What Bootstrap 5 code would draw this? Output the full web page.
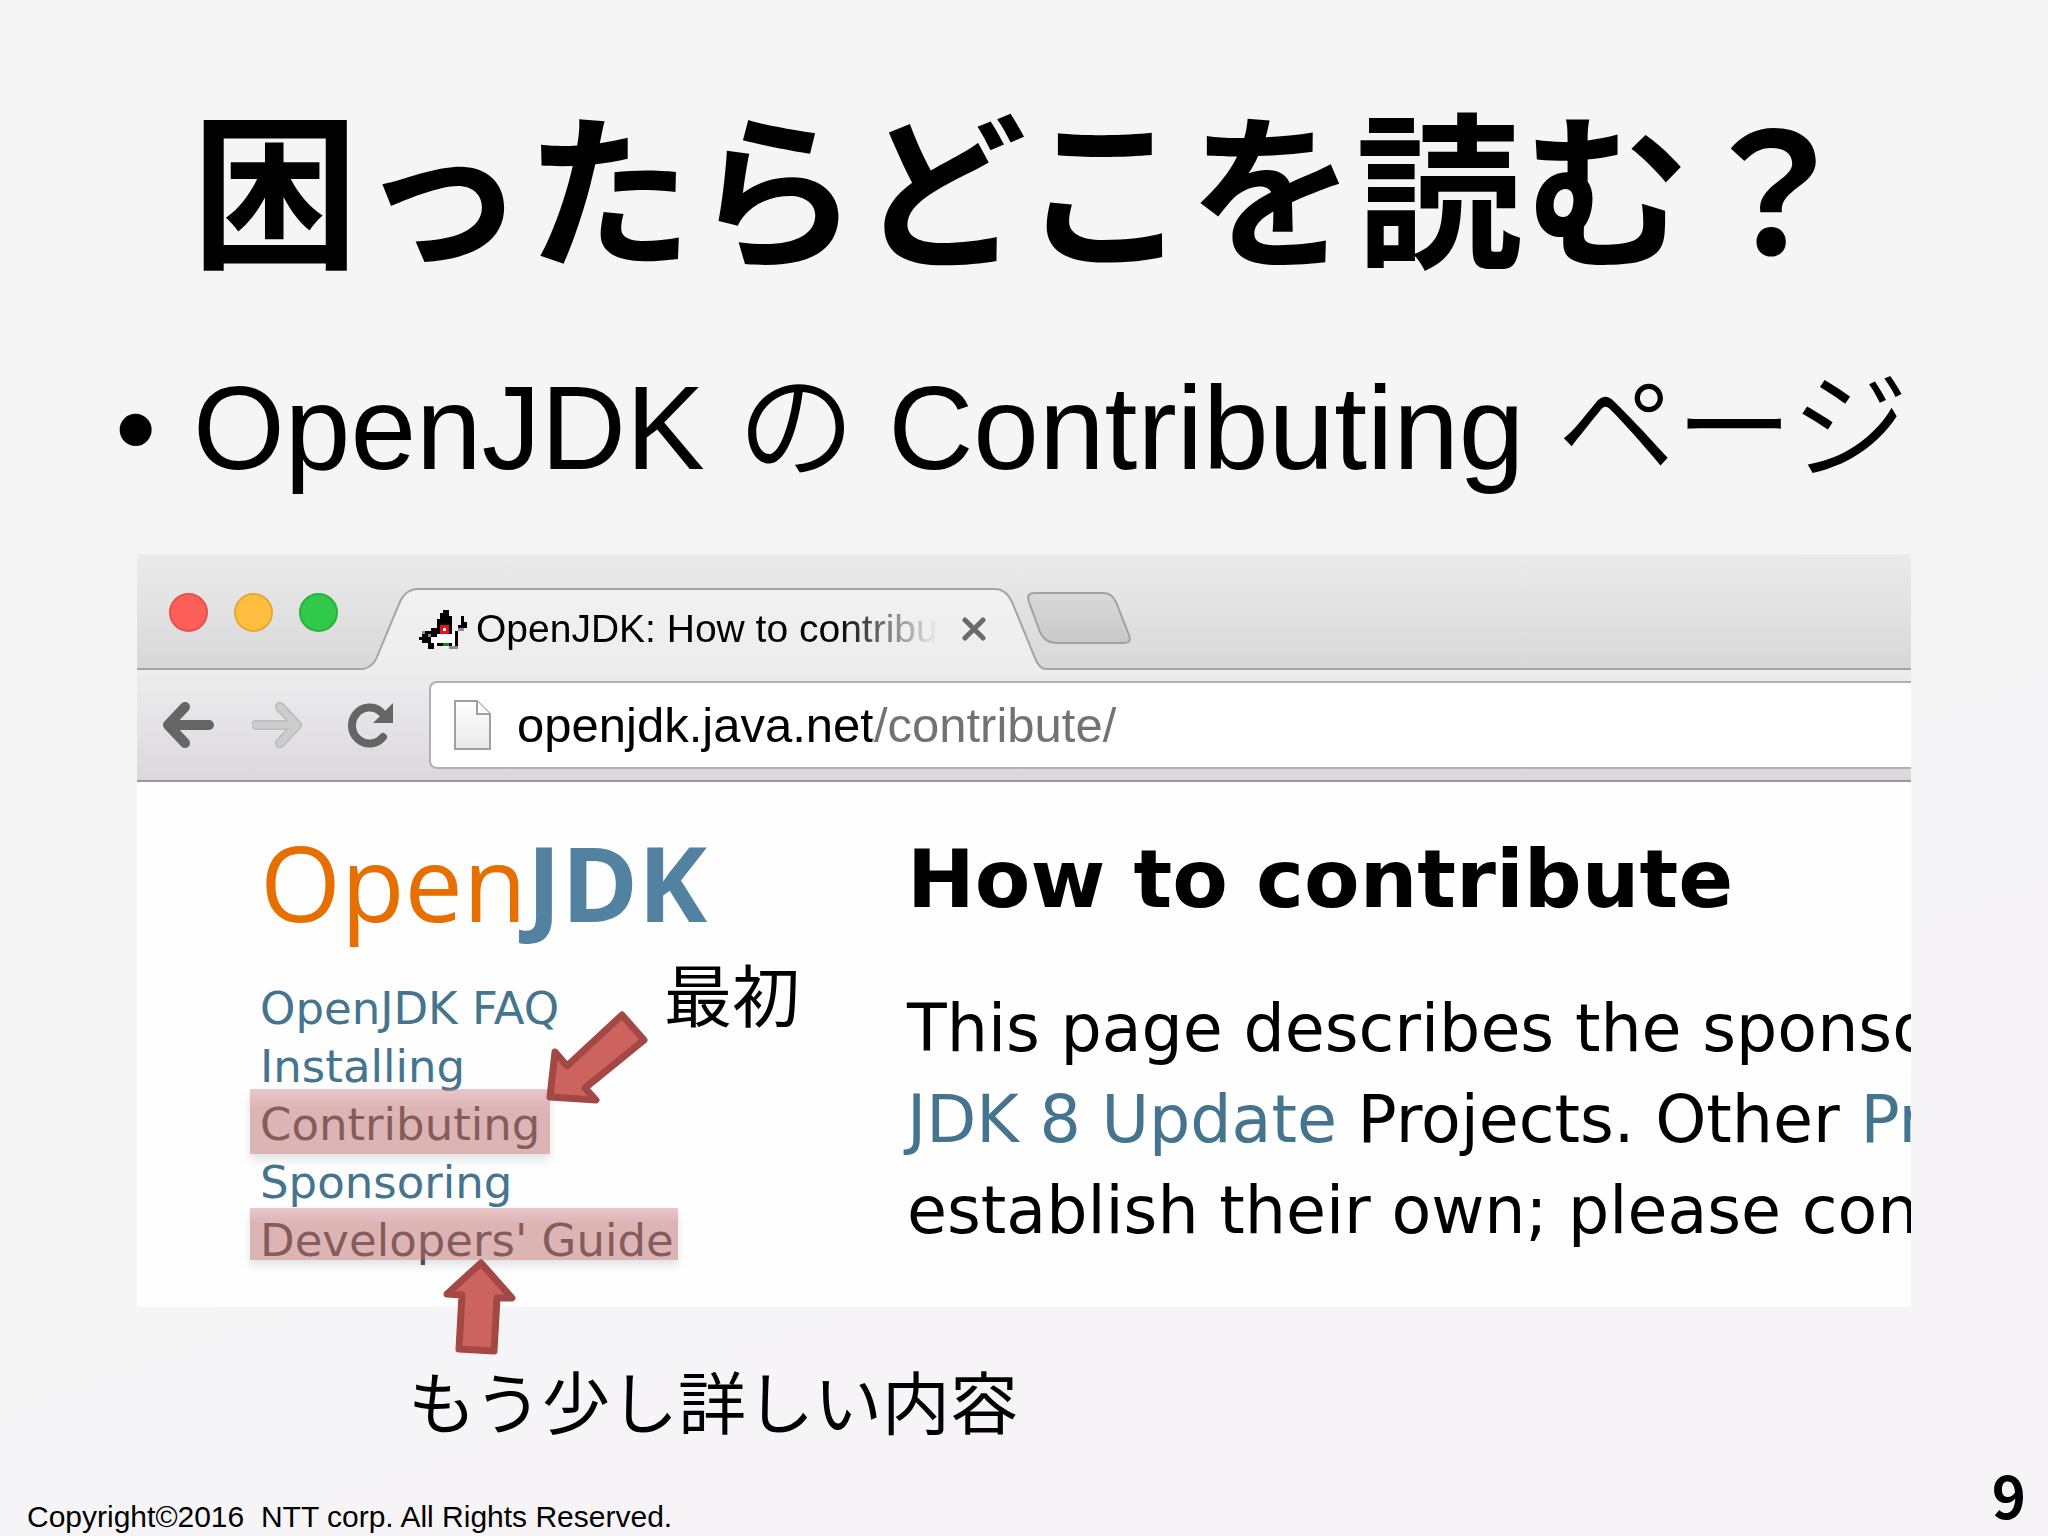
<!DOCTYPE html>
<html lang="ja">
<head>
<meta charset="utf-8">
<meta name="viewport" content="width=device-width, initial-scale=1">
<title>困ったらどこを読む？</title>
<link href="https://cdn.jsdelivr.net/npm/bootstrap@5.3.0/dist/css/bootstrap.min.css" rel="stylesheet">
<style>
  body { background: #f5f5f5; color: #000; font-family: "Liberation Sans", "Noto Sans CJK JP", sans-serif; }
  .slide { background: linear-gradient(160deg, #f5f5f5 45%, #f6f4f7 80%); padding-top: 82px; }
  .slide-title { font: 700 167px/200px "Noto Sans CJK JP", sans-serif; margin-bottom: 76px; }
  .points { padding-left: 115px; margin-bottom: 56px; font-size: 118px; line-height: 140px; font-weight: 350; }
  .points .dot { flex: 0 0 78px; }
  .shot-wrap { margin: 0 137px; }
  .shot { background: #fefefe; overflow: hidden; }

  .strip { height: 116px; background: linear-gradient(#ebebeb, #d8d8d8); border-bottom: 2px solid #a5a5a7; padding-left: 32px; }
  .light { width: 39px; height: 39px; border-radius: 50%; border: 2px solid; }
  .lights { gap: 26px; margin-right: 25px; margin-top: 2px; }
  .tab { width: 682px; height: 82px; margin: 34px 0 -2px 0; padding: 0 61px 0 56px; }
  .tab-shape { left: 0; top: 0; }
  .tab-text { font-size: 39px; line-height: 44px; margin-left: 9px; -webkit-mask-image: linear-gradient(90deg, #000 78%, transparent 100%); mask-image: linear-gradient(90deg, #000 78%, transparent 100%); }
  .plain { background: none; border: 0; padding: 0; line-height: 0; }
  .newtab { margin: 14px 0 0 -18px; }

  .toolbar { height: 112px; background: linear-gradient(#eeedee, #dad8db); border-bottom: 2px solid #98979a; padding-left: 26px; }
  .tools { gap: 37px; margin-right: 34px; }
  .urlbar { height: 88px; background: #fff; border: 2px solid #b0afb2; border-right: 0; border-radius: 8px 0 0 8px; padding-left: 23px; gap: 25px; }
  .url { font-size: 49px; line-height: 60px; border: 0; outline: 0; padding: 0; color: transparent;
         background: linear-gradient(90deg, #000 355px, #717176 355px); -webkit-background-clip: text; background-clip: text; }

  .site { height: 525px; font-family: "DejaVu Sans", sans-serif; }
  .site a { color: #45748f; text-decoration: none; }
  .side { flex: 0 0 770px; padding: 38px 0 0 123px; }
  .logo { font-family: "Open Sans", sans-serif; font-size: 104px; line-height: 124px; color: #e76f00; margin-bottom: 36px; }
  .logo b { color: #5382a1; }
  .links { font-size: 45px; line-height: 58px; }
  .site a.hl { color: #4f4d4d; }
  .hl::after { content: ""; position: absolute; background: linear-gradient(rgba(205,130,140,.45), rgba(187,107,107,.5) 30%); box-shadow: 0 6px 8px rgba(60,70,90,.14); }
  .hl-a::after { inset: -7px -10px 0 -10px; }
  .hl-b::after { inset: -4px -4px 10px -10px; }
  .main { padding-top: 47px; white-space: nowrap; }
  .main h2 { font-size: 81px; line-height: 100px; font-weight: 700; margin-bottom: 54px; }
  .main p { font-size: 65px; line-height: 91px; }

  .marks { left: 0; top: 0; overflow: visible; }
  .note { font-size: 68px; line-height: 84px; }
  .note-first { left: 527px; top: 402px; }
  .note-more { padding-left: 408px; margin-top: 56px; }
  .foot { padding: 0 22px 0 27px; }
  .copy { font-size: 30px; line-height: 38px; white-space: pre; }
  .pageno { font: 700 58px/84px "Noto Sans CJK JP", sans-serif; }
</style>
</head>
<body>
<main class="slide min-vh-100 d-flex flex-column overflow-hidden">
  <h1 class="slide-title text-center text-nowrap">困ったらどこを読む？</h1>
  <ul class="points list-unstyled text-nowrap">
    <li class="d-flex"><span class="dot">•</span><span>OpenJDK の Contributing ページ</span></li>
  </ul>

  <div class="shot-wrap position-relative">
    <div class="shot">
      <div class="strip d-flex">
        <div class="lights d-flex align-items-center">
          <span class="light" style="background:#ff5f5b;border-color:#e5524e"></span>
          <span class="light" style="background:#ffbe3e;border-color:#e3a838"></span>
          <span class="light" style="background:#31c948;border-color:#2ab140"></span>
        </div>
        <div class="tab position-relative d-flex align-items-center">
          <svg class="tab-shape position-absolute" width="682" height="82" viewBox="0 0 682 82">
            <defs><linearGradient id="tg" x1="0" y1="0" x2="0" y2="1"><stop offset="0" stop-color="#f1f1f1"/><stop offset="1" stop-color="#eeedee"/></linearGradient></defs>
            <path d="M0 82V81Q10 79 14 69L36 16Q42 1 55 1H632Q643 1 649 14L672 70Q676 80 682 81V82Z" fill="url(#tg)"/>
            <path d="M0 81Q10 79 14 69L36 16Q42 1 55 1H632Q643 1 649 14L672 70Q676 80 682 81" fill="none" stroke="#a5a5a7" stroke-width="2"/>
          </svg>
          <svg class="position-relative flex-shrink-0" width="48" height="39" viewBox="0 0 16 13" shape-rendering="crispEdges">
            <path fill="#000" d="M8 0h2v1h-2zM7 1h3v1h-3zM7 2h4v1h-4zM14 2h1v1h-1zM6 3h5v1h-5zM14 3h1v1h-1zM6 4h5v1h-5zM14 4h2v1h-2zM6 5h5v1h-5zM13 5h3v1h-3zM4 6h7v1h-7zM2 7h9v1h-9zM12 7h1v1h-1zM1 8h2v1h-2zM4 8h2v1h-2zM12 8h1v1h-1zM0 9h4v1h-4zM12 9h1v1h-1zM1 10h3v1h-3zM12 10h1v1h-1zM3 11h2v1h-2zM6 11h5v1h-5zM12 11h1v1h-1zM3 12h2v1h-2z"/>
            <path fill="#fff" d="M6 8h6v1h-6zM4 9h8v2h-8zM5 11h1v1h-1zM11 11h1v1h-1zM11 7h1v1h-1z"/>
            <path fill="#e8131a" d="M7 5h3v3h-3z"/><path fill="#fff" d="M8 6h1v1h-1z"/>
            <path fill="#0a8a12" d="M8 11h2v1h-2z"/>
            <path fill="#8b8b8b" d="M13 6h2v1h-2zM10 12h3v1h-3zM1 7h1v1h-1zM3 8h1v1h-1z"/>
          </svg>
          <span class="tab-text position-relative text-nowrap flex-grow-1">OpenJDK: How to contribu</span>
          <button type="button" class="plain position-relative ms-4" aria-label="Close">
            <svg width="24" height="24" viewBox="0 0 24 24"><path d="M3 3L21 21M21 3L3 21" stroke="#6b6b6b" stroke-width="5" stroke-linecap="round"/></svg>
          </button>
        </div>
        <button type="button" class="newtab plain position-relative" aria-label="New">
          <svg width="104" height="52" viewBox="0 0 104 52">
            <defs><linearGradient id="ng" x1="0" y1="0" x2="0" y2="1"><stop offset="0" stop-color="#d9d9d9"/><stop offset="1" stop-color="#c8c8c9"/></linearGradient></defs>
            <path d="M7 1H76Q85 1 89 10L102 43Q105 51 97 51H29Q18 51 13 40L2 10Q-1 1 7 1Z" fill="url(#ng)" stroke="#a2a2a4" stroke-width="2"/>
          </svg>
        </button>
      </div>

      <div class="toolbar d-flex align-items-center">
        <div class="tools d-flex align-items-center">
          <button type="button" class="plain" aria-label="Back">
            <svg width="52" height="46" viewBox="0 0 52 46"><path d="M22 5L5 23L22 41M6 23H46" fill="none" stroke="#656565" stroke-width="10" stroke-linecap="round" stroke-linejoin="round"/></svg>
          </button>
          <button type="button" class="plain" aria-label="Forward">
            <svg width="50" height="46" viewBox="2 0 50 46"><path d="M30 5L47 23L30 41M46 23H6" fill="none" stroke="#b9b9ba" stroke-width="10" stroke-linecap="round" stroke-linejoin="round"/><path d="M30 5L47 23L30 41M46 23H6" fill="none" stroke="#cdcccd" stroke-width="7" stroke-linecap="round" stroke-linejoin="round"/></svg>
          </button>
          <button type="button" class="plain ms-2" aria-label="Reload">
            <svg width="48" height="46" viewBox="0 0 48 46"><path d="M36 35A17.500 18 0 1 1 34 10" fill="none" stroke="#656565" stroke-width="8" stroke-linecap="round"/><path d="M46 1V21H26Z" fill="#656565"/></svg>
          </button>
        </div>
        <div class="urlbar d-flex align-items-center flex-grow-1">
          <svg class="flex-shrink-0" width="38" height="50" viewBox="0 0 38 50">
            <defs><linearGradient id="pg" x1="0" y1="0" x2="0" y2="1"><stop offset="0" stop-color="#fff"/><stop offset="1" stop-color="#e9e8ea"/></linearGradient></defs>
            <path d="M1 1H23L36 14V49H1Z" fill="url(#pg)" stroke="#a0a0a2" stroke-width="2"/><path d="M23 1V14H36" fill="#fff" stroke="#a0a0a2" stroke-width="2"/>
          </svg>
          <input class="url flex-grow-1" type="text" value="openjdk.java.net/contribute/" aria-label="URL">
        </div>
      </div>

      <div class="site d-flex">
        <nav class="side">
          <div class="logo">Open<b>JDK</b></div>
          <ul class="links list-unstyled mb-0">
            <li><a href="#">OpenJDK FAQ</a></li>
            <li><a href="#">Installing</a></li>
            <li><a href="#" class="hl hl-a d-inline-block position-relative">Contributing</a></li>
            <li><a href="#">Sponsoring</a></li>
            <li><a href="#" class="hl hl-b d-inline-block position-relative">Developers' Guide</a></li>
          </ul>
        </nav>
        <article class="main">
          <h2>How to contribute</h2>
          <p class="mb-0">This page describes the sponso<br><a href="#">JDK 8 Update</a> Projects. Other <a href="#">Pr</a><br>establish their own; please con</p>
        </article>
      </div>
    </div>

    <svg class="marks position-absolute" width="560" height="810" viewBox="0 0 560 810" fill="#cd635f" stroke="#a34844" stroke-width="7" stroke-linejoin="round">
      <path d="M485 461L507 486L448 534L459 546L413 543L418 498L430 512Z"/>
      <path d="M344 709L375 744L360 744L357 797L322 795L325 741L310 740Z"/>
    </svg>
    <div class="note note-first position-absolute">最初</div>
  </div>

  <div class="note note-more text-nowrap">もう少し詳しい内容</div>

  <footer class="foot mt-auto d-flex justify-content-between align-items-end">
    <span class="copy">Copyright©2016  NTT corp. All Rights Reserved.</span>
    <span class="pageno">9</span>
  </footer>
</main>
<script src="https://cdn.jsdelivr.net/npm/bootstrap@5.3.0/dist/js/bootstrap.bundle.min.js"></script>
</body>
</html>
